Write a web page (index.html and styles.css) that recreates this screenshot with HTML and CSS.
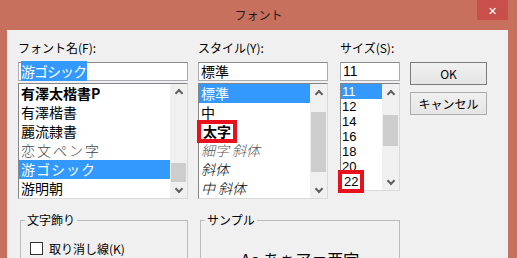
FILE: index.html
```html
<!DOCTYPE html>
<html lang="ja">
<head>
  <meta charset="UTF-8">
  <meta name="viewport" content="width=device-width, initial-scale=1.0">
  <title>フォント</title>
  <link rel="stylesheet" href="styles.css">
</head>
<body>
  <div class="window">
    <div class="titlebar">
      <span class="title">フォント</span>
      <span class="close">✕</span>
    </div>

    <div class="client">
      <div class="top">
        <div class="field col-name">
          <label class="caption">フォント名(F):</label>
          <div class="edit"><span class="sel-text">游ゴシック</span></div>
          <div class="listbox">
            <ul class="items">
              <li class="face-brush">有澤太楷書P</li>
              <li>有澤楷書</li>
              <li>麗流隷書</li>
              <li class="face-pen">恋文ペン字</li>
              <li class="selected face-wide">游ゴシック</li>
              <li>游明朝</li>
            </ul>
            <div class="scrollbar">
              <span class="arrow up"></span>
              <div class="track"><div class="thumb thumb-name"></div></div>
              <span class="arrow down"></span>
            </div>
          </div>
        </div>

        <div class="field col-style">
          <label class="caption">スタイル(Y):</label>
          <div class="edit">標準</div>
          <div class="listbox">
            <ul class="items">
              <li class="selected">標準</li>
              <li>中</li>
              <li><span class="marked bold">太字</span></li>
              <li class="italic thin">細字 斜体</li>
              <li class="italic">斜体</li>
              <li class="italic">中 斜体</li>
            </ul>
            <div class="scrollbar">
              <span class="arrow up"></span>
              <div class="track"><div class="thumb thumb-style"></div></div>
              <span class="arrow down"></span>
            </div>
          </div>
        </div>

        <div class="field col-size">
          <label class="caption">サイズ(S):</label>
          <div class="edit digits">11</div>
          <div class="listbox short">
            <ul class="items small">
              <li class="selected">11</li>
              <li>12</li>
              <li>14</li>
              <li>16</li>
              <li>18</li>
              <li>20</li>
              <li><span class="marked">22</span></li>
            </ul>
            <div class="scrollbar">
              <span class="arrow up"></span>
              <div class="track"><div class="thumb thumb-size"></div></div>
              <span class="arrow down"></span>
            </div>
          </div>
        </div>

        <div class="buttons">
          <button type="button" class="btn default">OK</button>
          <button type="button" class="btn">キャンセル</button>
        </div>
      </div>

      <div class="groups">
        <fieldset class="group effects">
          <legend>文字飾り</legend>
          <label class="check"><span class="box"></span>取り消し線(K)</label>
        </fieldset>
        <fieldset class="group sample">
          <legend>サンプル</legend>
          <div class="sample-text">Aa あぁアァ亜宇</div>
        </fieldset>
      </div>
    </div>
  </div>
</body>
</html>
```

FILE: styles.css
```css
body {
  margin: 0;
  overflow: hidden;
  font-family: "Noto Sans CJK JP", "Noto Sans", sans-serif;
  font-size: 12px;
  color: #000;
}
.window {
  width: 517px;
  height: 258px;
  background-color: #c8705e;
  box-sizing: border-box;
  padding: 0 9px 0 7px;
  overflow: hidden;
}
.titlebar {
  position: relative;
  height: 30px;
  display: flex;
  align-items: center;
  justify-content: center;
  margin: 0 -9px 0 -7px;
}
.title {
  font-size: 12px;
  color: #1c1c1c;
  line-height: 30px;
}
.close {
  position: absolute;
  top: 0;
  right: 9px;
  width: 31px;
  height: 20px;
  background-color: #c9504a;
  color: #fff;
  font-size: 11px;
  line-height: 20px;
  text-align: center;
}
.client {
  background-color: #f0f0f0;
  height: 228px;
  padding: 9px 0 0 11px;
  box-sizing: border-box;
}
.top {
  display: flex;
  align-items: flex-start;
}
.field {
  display: flex;
  flex-direction: column;
}
.col-name { width: 170px; margin-right: 10px; }
.col-style { width: 130px; margin-right: 12px; }
.col-size { width: 60px; margin-right: 10px; }

.caption {
  display: block;
  height: 18px;
  line-height: 18px;
  margin-bottom: 5px;
  white-space: nowrap;
}
.edit {
  height: 19px;
  box-sizing: border-box;
  background-color: #fff;
  border: 1px solid #abadb3;
  border-top-color: #8c8c8c;
  font-size: 14px;
  line-height: 17px;
  padding-left: 2px;
  margin-bottom: 2px;
  white-space: nowrap;
}
.edit.digits {
  font-family: "Liberation Sans", sans-serif;
  font-size: 14px;
}
.sel-text {
  background-color: #3399ff;
  color: #fff;
  letter-spacing: -1px;
  padding-right: 1px;
}
.listbox {
  display: flex;
  height: 116px;
  box-sizing: border-box;
  background-color: #fff;
  border: 1px solid;
  border-color: #858585 #dadada #dadada #858585;
}
.listbox.short {
  height: 108px;
}
.items {
  flex: 1;
  list-style: none;
  margin: 0;
  padding: 0;
  min-width: 0;
}
.items li {
  height: 19px;
  line-height: 19px;
  font-size: 14px;
  padding-left: 2px;
  white-space: nowrap;
}
.items.small li {
  height: 15px;
  line-height: 15px;
  font-family: "Liberation Sans", sans-serif;
  font-size: 13px;
  padding-left: 1px;
}
.items li.selected {
  background-color: #3399ff;
  color: #fff;
}
.face-brush { font-weight: 700; }
.face-pen { font-weight: 300; color: #444; letter-spacing: 2px; }
.face-wide { letter-spacing: 1px; }
.bold { font-weight: 700; }
.italic { font-style: italic; font-weight: 300; }
.thin { color: #555; }

.marked {
  display: inline-block;
  background-color: #fff;
  line-height: 15px;
  padding: 0 2px;
  outline: 4px solid #e8111d;
}

.scrollbar {
  width: 17px;
  display: flex;
  flex-direction: column;
  background-color: #f0f0f0;
}
.arrow {
  height: 17px;
  display: flex;
  align-items: center;
  justify-content: center;
}
.arrow::before {
  content: "";
  width: 4px;
  height: 4px;
  border-left: 2px solid #606060;
  border-top: 2px solid #606060;
}
.arrow.up::before {
  transform: translateY(1px) rotate(45deg);
}
.arrow.down::before {
  transform: translateY(-1px) rotate(225deg);
}
.track {
  flex: 1;
}
.thumb {
  background-color: #cdcdcd;
  margin: 0 1px;
}
.thumb-name { margin-top: 62px; height: 19px; }
.thumb-style { margin-top: 11px; height: 60px; }
.thumb-size { margin-top: 14px; height: 31px; }

.buttons {
  display: flex;
  flex-direction: column;
  gap: 7px;
  margin-top: 23px;
  width: 77px;
}
.btn {
  height: 23px;
  font-family: inherit;
  font-size: 12px;
  color: #000;
  background: linear-gradient(#f0f0f0, #e5e5e5);
  border: 1px solid #acacac;
  padding: 0;
}
.btn.default {
  border-color: #7a7a7a;
}

.groups {
  display: flex;
  gap: 12px;
  margin-top: 12px;
  padding-left: 2px;
}
.group {
  margin: 0;
  min-width: 0;
  height: 80px;
  box-sizing: border-box;
  border: 1px solid #bcbcbc;
  padding: 0 4px;
}
.group legend {
  padding: 0 2px;
  line-height: 18px;
}
.effects { width: 168px; }
.sample { width: 200px; }
.check {
  display: flex;
  align-items: center;
  height: 18px;
  margin: 10px 0 0 5px;
}
.box {
  width: 11px;
  height: 11px;
  border: 1px solid #333;
  background-color: #fff;
  margin-right: 6px;
}
.sample-text {
  text-align: center;
  font-size: 16px;
  line-height: 20px;
  margin-top: 20px;
  white-space: nowrap;
}
```
